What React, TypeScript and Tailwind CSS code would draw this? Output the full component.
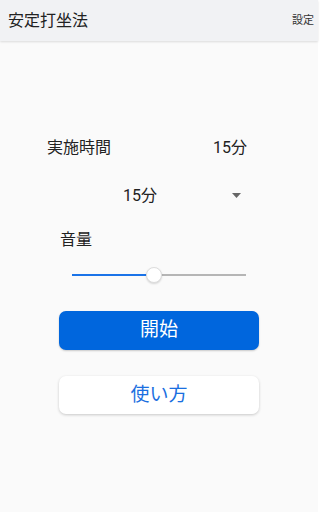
import { useState } from "react";

const FONT = { fontFamily: "Roboto, 'Noto Sans CJK JP', sans-serif" };

export default function App() {
  const [volume, setVolume] = useState(47);
  const [minutes, setMinutes] = useState(15);

  return (
    <div className="flex h-[512px] w-[318px] flex-col bg-[#fafafa] text-[#222]" style={FONT}>
      <header className="flex h-[41px] shrink-0 items-center justify-between bg-[#f1f2f4] pl-[8px] pr-[4px] shadow-[0_1px_2px_rgba(0,0,0,0.12)]">
        <h1 className="text-[16px] leading-none">安定打坐法</h1>
        <button className="text-[11px] leading-none text-[#333]">設定</button>
      </header>

      <main className="flex flex-col">
        <div className="mt-[97px] flex items-center justify-between pl-[47px] pr-[71px] text-[16px] leading-[20px]">
          <span>実施時間</span>
          <span>{minutes}分</span>
        </div>

        <div className="relative mt-[28px] flex h-[20px] items-center">
          <span className="w-full pl-[123px] text-[16px] leading-[20px]">{minutes}分</span>
          <svg className="absolute left-[232px] top-[7px]" width="9" height="5" viewBox="0 0 9 5">
            <path d="M0 0h9L4.5 5z" fill="#666" />
          </svg>
          <select
            className="absolute inset-y-0 left-[110px] w-[140px] opacity-0"
            value={minutes}
            onChange={(e) => setMinutes(Number(e.target.value))}
          >
            {[5, 10, 15, 20, 30].map((m) => (
              <option key={m} value={m}>{m}分</option>
            ))}
          </select>
        </div>

        <div className="mt-[24px] pl-[60px] text-[16px] leading-[20px]">音量</div>

        <div className="relative mx-[72px] mt-[17px] h-[16px]">
          <div className="absolute inset-x-0 top-[7px] h-[2px] bg-[#b5b5b5]" />
          <div className="absolute left-0 top-[7px] h-[2px] bg-[#1a73e8]" style={{ width: `${volume}%` }} />
          <div
            className="absolute top-0 h-[16px] w-[16px] -translate-x-1/2 rounded-full border border-[#ddd] bg-white shadow-[0_1px_2px_rgba(0,0,0,0.15)]"
            style={{ left: `${volume}%` }}
          />
          <input
            type="range"
            className="absolute inset-0 w-full opacity-0"
            value={volume}
            onChange={(e) => setVolume(Number(e.target.value))}
          />
        </div>

        <div className="mx-[59px] mt-[28px] flex flex-col gap-[26px]">
          <button className="h-[39px] rounded-[7px] bg-[#0066dd] text-[19px] text-white shadow-[0_1px_2px_rgba(0,0,0,0.2)]">
            開始
          </button>
          <button className="h-[38px] rounded-[7px] bg-white text-[19px] text-[#1a6fe0] shadow-[0_1px_3px_rgba(0,0,0,0.2)]">
            使い方
          </button>
        </div>
      </main>
    </div>
  );
}
